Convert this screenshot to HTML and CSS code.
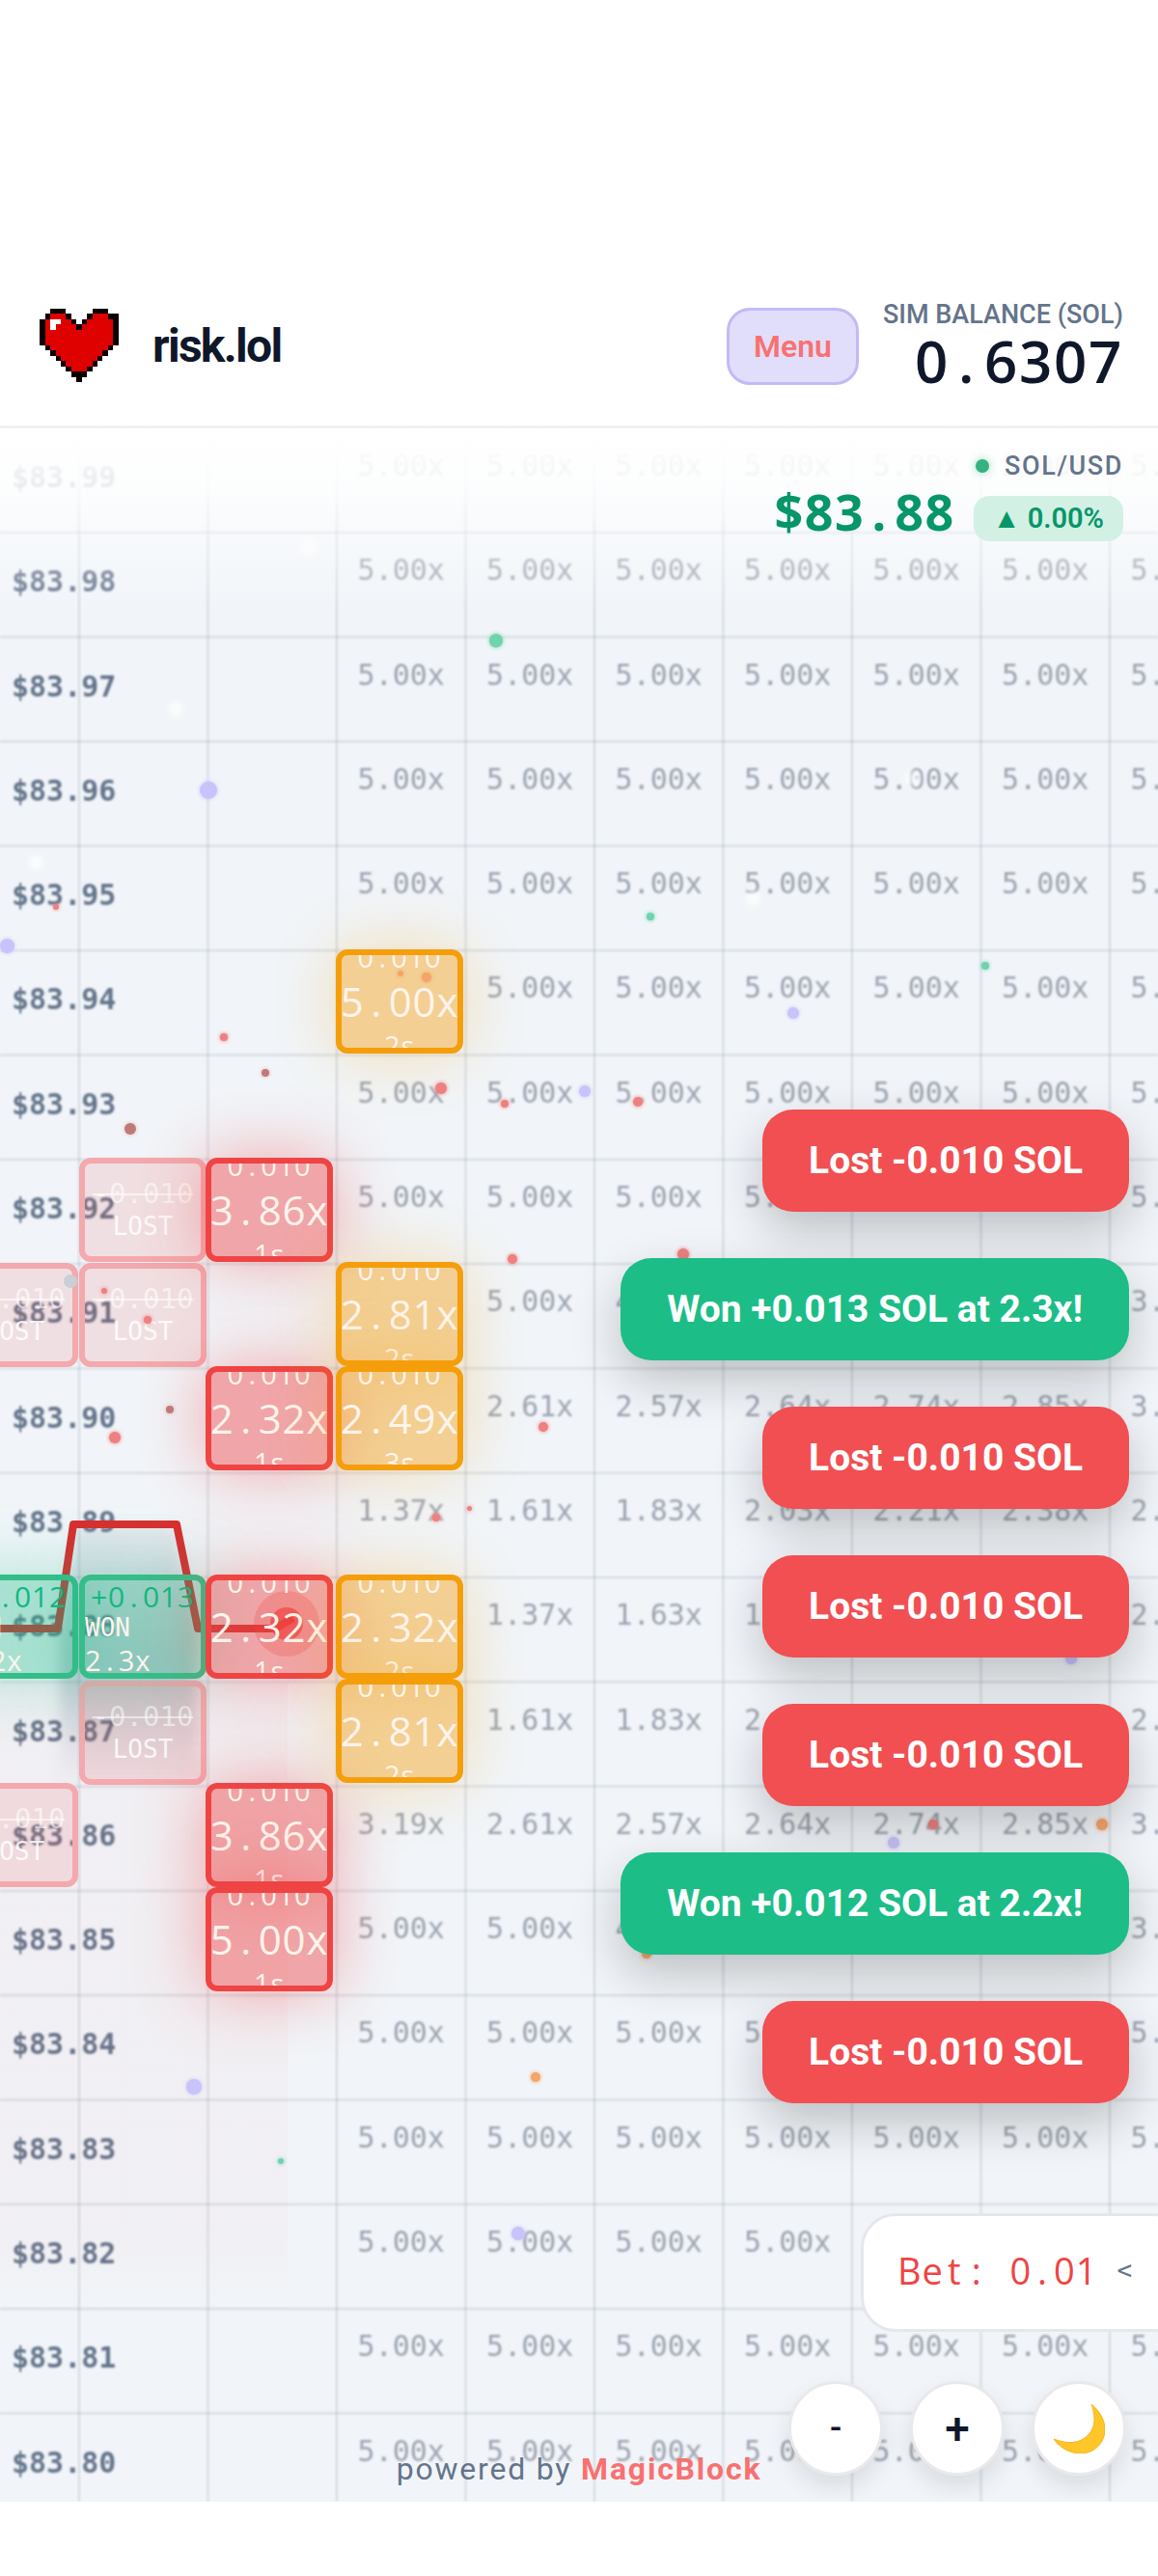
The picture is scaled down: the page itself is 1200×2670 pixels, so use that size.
FILE: index.html

```html
<!DOCTYPE html>
<html lang="en">
<head>
    <meta charset="UTF-8">
    <meta name="viewport" content="width=device-width, initial-scale=1.0">
    <title>risk.lol</title>
    <link rel="stylesheet" href="styles.css">
</head>
<body>

<div class="app">
    <header class="topbar">
        <div class="logo">
            <svg class="heart" viewBox="0 0 15 14" shape-rendering="crispEdges">
                <path fill="#df0000" d="M2 1h3v1h-3zM10 1h3v1h-3zM1 2h5v1h-5zM9 2h5v1h-5zM1 3h6v1h-6zM8 3h6v1h-6zM1 4h13v3h-13zM2 7h11v1h-11zM3 8h9v1h-9zM4 9h7v1h-7zM5 10h5v1h-5zM6 11h3v1h-3z"/>
                <path fill="#0c0000" d="M2 0h3v1h-3zM10 0h3v1h-3zM1 1h1v1h-1zM5 1h1v1h-1zM9 1h1v1h-1zM13 1h2v1h-2zM0 2h1v5h-1zM14 2h1v5h-1zM6 2h1v1h-1zM8 2h1v1h-1zM7 3h1v1h-1zM1 7h1v1h-1zM13 7h1v1h-1zM2 8h1v1h-1zM12 8h1v1h-1zM3 9h1v1h-1zM11 9h1v1h-1zM4 10h1v1h-1zM10 10h1v1h-1zM5 11h1v1h-1zM9 11h1v1h-1zM6 12h3v1h-3zM7 13h1v1h-1z"/>
                <path fill="#ffffff" d="M2 2h2v1h-2zM2 3h1v1h-1z"/>
            </svg>
            <span class="brand">risk.lol</span>
        </div>
        <div class="topbar-right">
            <button class="menu-btn">Menu</button>
            <div class="balance">
                <div class="balance-label">SIM BALANCE (SOL)</div>
                <div class="balance-value mono">0<span class="pt">.</span>6307</div>
            </div>
        </div>
    </header>

    <main class="chart">
        <div class="grid-lines"></div>

        <div class="rows">
            <div class="row"><span class="price">$83.99</span><span class="mult">5.00x</span><span class="mult">5.00x</span><span class="mult">5.00x</span><span class="mult">5.00x</span><span class="mult">5.00x</span><span class="mult">5.00x</span><span class="mult">5.00x</span></div>
            <div class="row"><span class="price">$83.98</span><span class="mult">5.00x</span><span class="mult">5.00x</span><span class="mult">5.00x</span><span class="mult">5.00x</span><span class="mult">5.00x</span><span class="mult">5.00x</span><span class="mult">5.00x</span></div>
            <div class="row"><span class="price">$83.97</span><span class="mult">5.00x</span><span class="mult">5.00x</span><span class="mult">5.00x</span><span class="mult">5.00x</span><span class="mult">5.00x</span><span class="mult">5.00x</span><span class="mult">5.00x</span></div>
            <div class="row"><span class="price">$83.96</span><span class="mult">5.00x</span><span class="mult">5.00x</span><span class="mult">5.00x</span><span class="mult">5.00x</span><span class="mult">5.00x</span><span class="mult">5.00x</span><span class="mult">5.00x</span></div>
            <div class="row"><span class="price">$83.95</span><span class="mult">5.00x</span><span class="mult">5.00x</span><span class="mult">5.00x</span><span class="mult">5.00x</span><span class="mult">5.00x</span><span class="mult">5.00x</span><span class="mult">5.00x</span></div>
            <div class="row"><span class="price">$83.94</span><span class="mult"></span><span class="mult">5.00x</span><span class="mult">5.00x</span><span class="mult">5.00x</span><span class="mult">5.00x</span><span class="mult">5.00x</span><span class="mult">5.00x</span></div>
            <div class="row"><span class="price">$83.93</span><span class="mult">5.00x</span><span class="mult">5.00x</span><span class="mult">5.00x</span><span class="mult">5.00x</span><span class="mult">5.00x</span><span class="mult">5.00x</span><span class="mult">5.00x</span></div>
            <div class="row"><span class="price">$83.92</span><span class="mult">5.00x</span><span class="mult">5.00x</span><span class="mult">5.00x</span><span class="mult">5.00x</span><span class="mult">5.00x</span><span class="mult">5.00x</span><span class="mult">5.00x</span></div>
            <div class="row"><span class="price">$83.91</span><span class="mult"></span><span class="mult">5.00x</span><span class="mult">4.51x</span><span class="mult">4.12x</span><span class="mult">3.86x</span><span class="mult">3.61x</span><span class="mult">3.42x</span></div>
            <div class="row"><span class="price">$83.90</span><span class="mult"></span><span class="mult">2.61x</span><span class="mult">2.57x</span><span class="mult">2.64x</span><span class="mult">2.74x</span><span class="mult">2.85x</span><span class="mult">3.02x</span></div>
            <div class="row"><span class="price">$83.89</span><span class="mult">1.37x</span><span class="mult">1.61x</span><span class="mult">1.83x</span><span class="mult">2.03x</span><span class="mult">2.21x</span><span class="mult">2.38x</span><span class="mult">2.54x</span></div>
            <div class="row"><span class="price">$83.88</span><span class="mult"></span><span class="mult">1.37x</span><span class="mult">1.63x</span><span class="mult">1.83x</span><span class="mult">2.03x</span><span class="mult">2.21x</span><span class="mult">2.38x</span></div>
            <div class="row"><span class="price">$83.87</span><span class="mult"></span><span class="mult">1.61x</span><span class="mult">1.83x</span><span class="mult">2.03x</span><span class="mult">2.21x</span><span class="mult">2.38x</span><span class="mult">2.54x</span></div>
            <div class="row"><span class="price">$83.86</span><span class="mult">3.19x</span><span class="mult">2.61x</span><span class="mult">2.57x</span><span class="mult">2.64x</span><span class="mult">2.74x</span><span class="mult">2.85x</span><span class="mult">3.02x</span></div>
            <div class="row"><span class="price">$83.85</span><span class="mult">5.00x</span><span class="mult">5.00x</span><span class="mult">4.51x</span><span class="mult">4.12x</span><span class="mult">3.86x</span><span class="mult">3.61x</span><span class="mult">3.42x</span></div>
            <div class="row"><span class="price">$83.84</span><span class="mult">5.00x</span><span class="mult">5.00x</span><span class="mult">5.00x</span><span class="mult">5.00x</span><span class="mult">5.00x</span><span class="mult">5.00x</span><span class="mult">5.00x</span></div>
            <div class="row"><span class="price">$83.83</span><span class="mult">5.00x</span><span class="mult">5.00x</span><span class="mult">5.00x</span><span class="mult">5.00x</span><span class="mult">5.00x</span><span class="mult">5.00x</span><span class="mult">5.00x</span></div>
            <div class="row"><span class="price">$83.82</span><span class="mult">5.00x</span><span class="mult">5.00x</span><span class="mult">5.00x</span><span class="mult">5.00x</span><span class="mult">5.00x</span><span class="mult">5.00x</span><span class="mult">5.00x</span></div>
            <div class="row"><span class="price">$83.81</span><span class="mult">5.00x</span><span class="mult">5.00x</span><span class="mult">5.00x</span><span class="mult">5.00x</span><span class="mult">5.00x</span><span class="mult">5.00x</span><span class="mult">5.00x</span></div>
            <div class="row"><span class="price">$83.80</span><span class="mult">5.00x</span><span class="mult">5.00x</span><span class="mult">5.00x</span><span class="mult">5.00x</span><span class="mult">5.00x</span><span class="mult">5.00x</span><span class="mult">5.00x</span></div>
        </div>

        <div class="tint"></div>

        <svg class="path" viewBox="0 0 1200 2149">
            <defs>
                <linearGradient id="shade" x1="0" y1="0" x2="0" y2="1">
                    <stop offset="0" stop-color="#64748b" stop-opacity="0.1"/>
                    <stop offset="0.55" stop-color="#64748b" stop-opacity="0.3"/>
                    <stop offset="1" stop-color="#64748b" stop-opacity="0"/>
                </linearGradient>
                <filter id="soft" x="-30%" y="-10%" width="160%" height="120%">
                    <feGaussianBlur stdDeviation="7"/>
                </filter>
            </defs>
            <path fill="url(#shade)" filter="url(#soft)" d="M62 1244L78 1136H181L203 1244V1410H62Z"/>
            <path fill="none" stroke="#d92f2f" stroke-width="8" stroke-linejoin="round" d="M-10 1244H60L76 1136H183L205 1244H285L304 1233"/>
            <circle cx="297" cy="1239" r="34" fill="#ef4444" fill-opacity="0.25"/>
            <circle cx="297" cy="1239" r="17" fill="#ef4444" fill-opacity="0.7"/>
        </svg>

        <!-- old bets -->
        <div class="bet lost" style="left:82px;top:756px"><span class="bet-stake">-0.010</span><span class="bet-status">LOST</span></div>
        <div class="bet lost" style="left:82px;top:865px"><span class="bet-stake">-0.010</span><span class="bet-status">LOST</span></div>
        <div class="bet lost" style="left:82px;top:1298px"><span class="bet-stake">-0.010</span><span class="bet-status">LOST</span></div>
        <div class="bet lost" style="left:-51px;top:865px"><span class="bet-stake">-0.010</span><span class="bet-status">LOST</span></div>
        <div class="bet lost" style="left:-51px;top:1404px"><span class="bet-stake">-0.010</span><span class="bet-status">LOST</span></div>
        <div class="bet won" style="left:-51px;top:1188px"><span class="won-amount mono">+0<span class="pt">.</span>012</span><span class="won-status">WON</span><span class="won-mult mono">2<span class="pt">.</span>2x</span></div>
        <div class="bet won" style="left:82px;top:1188px"><span class="won-amount mono">+0<span class="pt">.</span>013</span><span class="won-status">WON</span><span class="won-mult mono">2<span class="pt">.</span>3x</span></div>

        <!-- live bets -->
        <div class="bet live red mono" style="left:213px;top:756px"><span class="bet-stake">0<span class="pt">.</span>010</span><span class="bet-mult">3<span class="pt">.</span>86x</span><span class="bet-time">1s</span></div>
        <div class="bet live red mono" style="left:213px;top:972px"><span class="bet-stake">0<span class="pt">.</span>010</span><span class="bet-mult">2<span class="pt">.</span>32x</span><span class="bet-time">1s</span></div>
        <div class="bet live red mono" style="left:213px;top:1188px"><span class="bet-stake">0<span class="pt">.</span>010</span><span class="bet-mult">2<span class="pt">.</span>32x</span><span class="bet-time">1s</span></div>
        <div class="bet live red mono" style="left:213px;top:1404px"><span class="bet-stake">0<span class="pt">.</span>010</span><span class="bet-mult">3<span class="pt">.</span>86x</span><span class="bet-time">1s</span></div>
        <div class="bet live red mono" style="left:213px;top:1512px"><span class="bet-stake">0<span class="pt">.</span>010</span><span class="bet-mult">5<span class="pt">.</span>00x</span><span class="bet-time">1s</span></div>
        <div class="bet live amber mono" style="left:348px;top:540px"><span class="bet-stake">0<span class="pt">.</span>010</span><span class="bet-mult">5<span class="pt">.</span>00x</span><span class="bet-time">2s</span></div>
        <div class="bet live amber mono" style="left:348px;top:864px"><span class="bet-stake">0<span class="pt">.</span>010</span><span class="bet-mult">2<span class="pt">.</span>81x</span><span class="bet-time">2s</span></div>
        <div class="bet live amber mono" style="left:348px;top:972px"><span class="bet-stake">0<span class="pt">.</span>010</span><span class="bet-mult">2<span class="pt">.</span>49x</span><span class="bet-time">3s</span></div>
        <div class="bet live amber mono" style="left:348px;top:1188px"><span class="bet-stake">0<span class="pt">.</span>010</span><span class="bet-mult">2<span class="pt">.</span>32x</span><span class="bet-time">2s</span></div>
        <div class="bet live amber mono" style="left:348px;top:1296px"><span class="bet-stake">0<span class="pt">.</span>010</span><span class="bet-mult">2<span class="pt">.</span>81x</span><span class="bet-time">2s</span></div>

        <!-- particles -->
        <i class="dot green" style="left:507px;top:213px;width:14px;height:14px"></i>
        <i class="dot purple" style="left:207px;top:366px;width:18px;height:18px"></i>
        <i class="dot purple" style="left:0px;top:529px;width:15px;height:15px"></i>
        <i class="dot red" style="left:55px;top:493px;width:6px;height:6px"></i>
        <i class="dot green" style="left:670px;top:502px;width:8px;height:8px"></i>
        <i class="dot green" style="left:1017px;top:553px;width:8px;height:8px"></i>
        <i class="dot purple" style="left:816px;top:600px;width:12px;height:12px"></i>
        <i class="dot red" style="left:228px;top:627px;width:8px;height:8px"></i>
        <i class="dot brown" style="left:271px;top:664px;width:8px;height:8px"></i>
        <i class="dot brown" style="left:129px;top:720px;width:12px;height:12px"></i>
        <i class="dot red" style="left:451px;top:678px;width:12px;height:12px"></i>
        <i class="dot red" style="left:519px;top:696px;width:8px;height:8px"></i>
        <i class="dot purple" style="left:600px;top:681px;width:12px;height:12px"></i>
        <i class="dot red" style="left:656px;top:693px;width:10px;height:10px"></i>
        <i class="dot red" style="left:526px;top:856px;width:10px;height:10px"></i>
        <i class="dot red" style="left:702px;top:850px;width:12px;height:12px"></i>
        <i class="dot brown" style="left:172px;top:1013px;width:8px;height:8px"></i>
        <i class="dot red" style="left:113px;top:1040px;width:12px;height:12px"></i>
        <i class="dot red" style="left:558px;top:1030px;width:10px;height:10px"></i>
        <i class="dot red" style="left:484px;top:1117px;width:5px;height:5px"></i>
        <i class="dot red" style="left:448px;top:1125px;width:8px;height:8px"></i>
        <i class="dot orange" style="left:550px;top:1704px;width:10px;height:10px"></i>
        <i class="dot purple" style="left:193px;top:1711px;width:16px;height:16px"></i>
        <i class="dot green" style="left:288px;top:1793px;width:6px;height:6px"></i>
        <i class="dot purple" style="left:530px;top:1864px;width:14px;height:14px"></i>
        <i class="dot orange" style="left:665px;top:1576px;width:10px;height:10px"></i>
        <i class="dot red" style="left:962px;top:1442px;width:10px;height:10px"></i>
        <i class="dot orange" style="left:1136px;top:1441px;width:12px;height:12px"></i>
        <i class="dot purple" style="left:920px;top:1460px;width:12px;height:12px"></i>
        <i class="dot purple" style="left:1104px;top:1269px;width:12px;height:12px"></i>
        <i class="dot white" style="left:312px;top:115px;width:16px;height:16px"></i>
        <i class="dot white" style="left:174px;top:283px;width:16px;height:16px"></i>
        <i class="dot white" style="left:937px;top:355px;width:16px;height:16px"></i>
        <i class="dot white" style="left:29px;top:442px;width:16px;height:16px"></i>
        <i class="dot white" style="left:772px;top:479px;width:16px;height:16px"></i>
        <i class="dot gray" style="left:66px;top:877px;width:14px;height:14px"></i>
        <i class="dot orange" style="left:412px;top:562px;width:6px;height:6px"></i>
        <i class="dot orange" style="left:437px;top:564px;width:10px;height:10px"></i>
        <i class="dot red" style="left:105px;top:891px;width:6px;height:6px"></i>
        <i class="dot red" style="left:149px;top:920px;width:8px;height:8px"></i>

        <div class="fade"></div>

        <div class="ticker">
            <div class="ticker-pair"><span class="live-dot"></span>SOL/USD</div>
            <div class="ticker-line">
                <span class="ticker-price mono">$83<span class="pt">.</span>88</span>
                <span class="ticker-change">▲ 0.00%</span>
            </div>
        </div>

        <div class="toasts">
            <div class="toast lose">Lost -0.010 SOL</div>
            <div class="toast win">Won +0.013 SOL at 2.3x!</div>
            <div class="toast lose">Lost -0.010 SOL</div>
            <div class="toast lose">Lost -0.010 SOL</div>
            <div class="toast lose">Lost -0.010 SOL</div>
            <div class="toast win">Won +0.012 SOL at 2.2x!</div>
            <div class="toast lose">Lost -0.010 SOL</div>
        </div>

        <div class="bet-panel">
            <span class="bet-amount mono">Be<span class="pt">t</span><span class="pt">:</span><span class="pt">&nbsp;</span>0<span class="pt">.</span>01</span>
            <span class="bet-arrow">&lt;</span>
        </div>

        <div class="controls">
            <button class="round-btn minus">-</button>
            <button class="round-btn">+</button>
            <button class="round-btn">
                <svg class="moon" viewBox="0 0 53 51">
                    <path fill="#ffc62a" stroke="#f5a800" stroke-width="0.8" d="M39 0C49 8 53 18 53 26C53 40 42 51 28 51C17 51 6 45 0 36C8 39 15 40 20 39.5C33 38 42 28 42 16C42 10 41 5 39 0Z"/>
                </svg>
            </button>
        </div>

        <div class="powered">powered by <b>MagicBlock</b></div>
    </main>
</div>

</body>
</html>
```

FILE: styles.css

```css
* {
    box-sizing: border-box;
}
body {
    font-family: 'Roboto', sans-serif;
    margin: 0;
    padding: 0;
    background-color: #ffffff;
    overflow: hidden;
}
.app {
    height: 2670px;
    padding: 280px 0 77px;
    display: flex;
    flex-direction: column;
}
.mono {
    font-family: 'Open Sans', sans-serif;
    letter-spacing: 0.028em;
}
.pt {
    display: inline-block;
    width: 0.6em;
    text-align: center;
}

/* top bar */
.topbar {
    flex: none;
    height: 164px;
    padding: 0 36px 4px 41px;
    display: flex;
    align-items: center;
    justify-content: space-between;
    border-bottom: 3px solid #eef0f3;
}
.logo {
    display: flex;
    align-items: center;
    gap: 35px;
}
.heart {
    width: 82px;
    height: 76px;
    margin-bottom: 2px;
}
.brand {
    font-size: 48px;
    font-weight: 700;
    letter-spacing: -1.7px;
    color: #0f172a;
}
.topbar-right {
    display: flex;
    align-items: center;
    gap: 25px;
}
.menu-btn {
    width: 137px;
    height: 80px;
    background: #e0defb;
    border: 3px solid #c4b9f5;
    border-radius: 24px;
    color: #f87171;
    font-family: 'Roboto', sans-serif;
    font-size: 32px;
    font-weight: 600;
}
.balance {
    text-align: right;
}
.balance-label {
    font-size: 27px;
    font-weight: 500;
    color: #64748b;
    line-height: 30px;
}
.balance-value {
    font-size: 60px;
    font-weight: 600;
    color: #0f172a;
    line-height: 66px;
}

/* chart */
.chart {
    flex: 1;
    position: relative;
    overflow: hidden;
    background: #f1f5f9;
}
.grid-lines {
    position: absolute;
    inset: 0;
    filter: blur(1px);
    background-image:
        linear-gradient(to bottom, rgba(100,116,139,0.2) 2px, transparent 2px),
        linear-gradient(to right, rgba(100,116,139,0.2) 2px, transparent 2px);
    background-size: 100% 108.3px, 133.5px 100%;
    background-position: 0 107px, 81px 0;
}
.rows {
    position: absolute;
    inset: 0;
    filter: blur(1px);
    font-family: 'DejaVu Sans Mono', monospace;
}
.row {
    height: 108.3px;
    display: grid;
    grid-template-columns: 349px repeat(7, 133.5px);
}
.price {
    padding-left: 12px;
    line-height: 102px;
    font-size: 30px;
    font-weight: 600;
    color: #64748b;
}
.mult {
    text-align: center;
    line-height: 78px;
    font-size: 30px;
    color: #9ca3af;
}
.tint {
    position: absolute;
    left: 0;
    top: 1300px;
    width: 298px;
    height: 660px;
    background: linear-gradient(to bottom, rgba(239,68,68,0.03) 85%, transparent);
}
.path {
    position: absolute;
    inset: 0;
    width: 1200px;
    height: 2149px;
}
.fade {
    position: absolute;
    left: 0;
    top: 0;
    width: 100%;
    height: 200px;
    background: linear-gradient(to bottom, #ffffff 0, rgba(255,255,255,0.85) 60px, rgba(255,255,255,0.5) 105px, transparent 190px);
}

/* bets */
.bet {
    position: absolute;
    width: 132px;
    height: 108px;
    border: 6px solid;
    border-radius: 12px;
    overflow: hidden;
    display: flex;
    flex-direction: column;
    align-items: center;
    justify-content: center;
    color: #fff4ec;
    font-family: 'DejaVu Sans Mono', monospace;
    font-size: 29px;
    white-space: nowrap;
}
.bet.mono {
    font-family: 'Open Sans', sans-serif;
    font-weight: 500;
}
.live {
    line-height: 46px;
}
.live > span {
    flex: none;
}
.bet-mult {
    font-size: 42px;
}
.red {
    background: rgba(239,68,68,0.45);
    border-color: #ef4444;
    box-shadow: 0 0 70px rgba(239,68,68,0.45);
}
.amber {
    background: rgba(245,158,11,0.43);
    border-color: #f59e0b;
    box-shadow: 0 0 70px rgba(245,158,11,0.3);
}
.lost {
    background: rgba(239,68,68,0.12);
    border-color: #f3a9ad;
    color: rgba(255,255,255,0.85);
    line-height: 34px;
}
.lost .bet-stake {
    text-decoration: line-through;
    color: rgba(255,255,255,0.6);
}
.lost .bet-status {
    font-size: 26px;
}
.won {
    background: rgba(16,185,129,0.32);
    border-color: #34be8a;
    box-shadow: 0 0 70px rgba(16,185,129,0.3);
    align-items: flex-start;
    justify-content: flex-start;
    line-height: 33px;
}
.won-amount {
    align-self: center;
    color: #10b981;
    font-size: 30px;
    font-weight: 500;
}
.won-status {
    font-size: 26px;
}

/* particles */
.dot {
    position: absolute;
    border-radius: 50%;
}
.dot.green {
    background: #6fd3ad;
    box-shadow: 0 0 4px #6fd3ad;
}
.dot.purple {
    background: #c9c3fb;
    box-shadow: 0 0 4px #c9c3fb;
}
.dot.red {
    background: #ee8080;
    box-shadow: 0 0 4px #ee8080;
}
.dot.brown {
    background: #bf7a78;
    box-shadow: 0 0 4px #e4b4b4;
}
.dot.orange {
    background: #f4a56a;
    box-shadow: 0 0 4px #f4a56a;
}
.dot.white {
    background: rgba(255,255,255,0.7);
    filter: blur(3px);
}
.dot.gray {
    background: #c9cfd3;
}

/* price ticker */
.ticker {
    position: absolute;
    top: 24px;
    right: 36px;
    display: flex;
    flex-direction: column;
    align-items: flex-end;
    gap: 10px;
}
.ticker-pair {
    display: flex;
    align-items: center;
    gap: 16px;
    font-size: 27px;
    font-weight: 500;
    letter-spacing: 1.6px;
    color: #64748b;
    line-height: 30px;
}
.live-dot {
    width: 14px;
    height: 14px;
    border-radius: 50%;
    background: #34b27f;
    box-shadow: 0 0 8px rgba(52,178,127,0.5);
}
.ticker-line {
    display: flex;
    align-items: flex-start;
    gap: 19px;
}
.ticker-price {
    font-size: 52px;
    font-weight: 700;
    color: #059669;
    line-height: 62px;
    margin-top: -9px;
}
.ticker-change {
    height: 47px;
    margin-top: 6px;
    padding: 0 20px;
    background: #d3f0e5;
    border-radius: 16px;
    color: #059669;
    font-size: 29px;
    font-weight: 600;
    line-height: 47px;
}

/* toasts */
.toasts {
    position: absolute;
    top: 706px;
    right: 30px;
    display: flex;
    flex-direction: column;
    align-items: flex-end;
    gap: 48px;
}
.toast {
    height: 106px;
    padding: 0 48px;
    border-radius: 32px;
    color: #ffffff;
    font-size: 39px;
    font-weight: 700;
    line-height: 106px;
    box-shadow: 0 20px 50px rgba(0,0,0,0.22);
}
.lose {
    background: #f14f52;
}
.win {
    background: #1cbd87;
}

/* bet panel + buttons */
.bet-panel {
    position: absolute;
    top: 1850px;
    left: 892px;
    width: 340px;
    height: 123px;
    padding: 0 0 6px 35px;
    background: #ffffff;
    border: 3px solid #e5e7eb;
    border-radius: 36px;
    display: flex;
    align-items: center;
    gap: 20px;
}
.bet-amount {
    font-size: 38px;
    color: #ef4444;
}
.bet-arrow {
    font-family: 'DejaVu Sans Mono', monospace;
    font-size: 26px;
    color: #64748b;
}
.controls {
    position: absolute;
    top: 2024px;
    right: 33px;
    display: flex;
    gap: 28px;
}
.round-btn {
    width: 98px;
    height: 98px;
    padding: 0;
    background: #ffffff;
    border: 3px solid #e9e9ec;
    border-radius: 50%;
    color: #0f172a;
    font-family: 'Roboto', sans-serif;
    font-size: 46px;
    font-weight: 500;
    box-shadow: 0 12px 24px rgba(0,0,0,0.1);
    display: flex;
    align-items: center;
    justify-content: center;
}
.minus {
    font-size: 36px;
}
.moon {
    width: 53px;
    height: 51px;
}
.powered {
    position: absolute;
    left: 0;
    right: 0;
    bottom: 15px;
    text-align: center;
    font-size: 32px;
    letter-spacing: 1.8px;
    color: #64748b;
    line-height: 38px;
}
.powered b {
    color: #f87171;
    font-weight: 700;
}
```
